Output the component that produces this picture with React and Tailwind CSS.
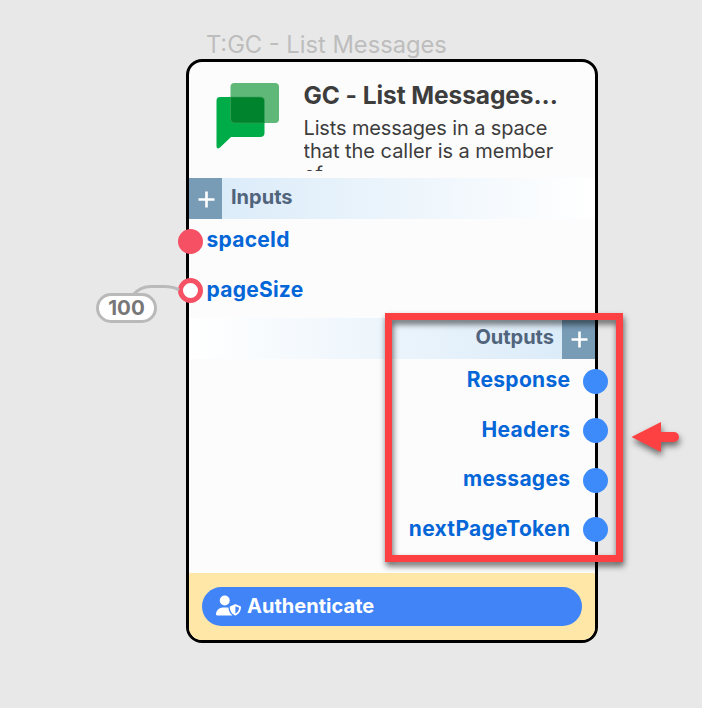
import { FaUserShield } from "react-icons/fa6";

function Plus() {
  return (
    <div className="flex h-[41px] w-[33px] shrink-0 items-center justify-center bg-[#789bb6]">
      <svg className="mt-[2px] ml-px" width="17" height="17" viewBox="0 0 17 17">
        <path d="M8.5 0.5V16.5M0.5 8.5H16.5" stroke="#fff" strokeWidth="2.6" />
      </svg>
    </div>
  );
}

function InputPort({ name, hollow }) {
  return (
    <div className="-ml-[11.5px] flex h-[49.6px] items-start gap-[4px] pt-[9.5px]">
      <div className={"h-[25px] w-[25px] shrink-0 rounded-full " + (hollow ? "border-[5px] border-[#f55064] bg-white" : "bg-[#f55064]")} />
      <span className="-mt-[2.4px] text-[21px] leading-[28px] font-bold tracking-[0.25px] text-[#0566d8]">{name}</span>
    </div>
  );
}

function OutputPort({ name }) {
  return (
    <div className="-mr-[13px] flex h-[49.6px] items-start justify-end gap-[12.7px] pt-[9.5px]">
      <span className="-mt-[2.4px] text-[21px] leading-[28px] font-bold tracking-[0.3px] text-[#0566d8]">{name}</span>
      <div className="h-[25px] w-[25px] shrink-0 rounded-full bg-[#3d8bfb]" />
    </div>
  );
}

function ChatLogo() {
  return (
    <svg className="mt-[21px] ml-[27px] shrink-0" width="64" height="66" viewBox="0 0 64 66">
      <path d="M4 14H44Q48.5 14 48.5 18V50Q48.5 54 44 54H15L4 64.5Q0.5 67 0.5 63V18Q0.5 14 4 14Z" fill="#00ac47" />
      <rect x="14.5" y="0" width="48.5" height="40" rx="4" fill="#5fb877" />
      <path d="M14.5 14H44Q48.5 14 48.5 18V40H18.5Q14.5 40 14.5 36Z" fill="#00832d" />
      <path d="M14.5 14H44Q48.5 14 48.5 18V40H18.5Q14.5 40 14.5 36Z" fill="none" stroke="#39a35a" strokeWidth="0.6" />
    </svg>
  );
}

export default function App() {
  return (
    <div className="relative h-[708px] w-[702px] overflow-hidden bg-[#e8e8e8] font-['Inter',sans-serif]">
      <div className="absolute top-[30px] left-[206px] text-[23.7px] leading-[30px] whitespace-nowrap text-[#bdbdbd]">T:GC - List Messages</div>

      <section className="absolute top-[59px] left-[186px] flex h-[584px] w-[412px] flex-col rounded-[16px] border-[3px] border-black bg-[#fcfcfc]">
        <header className="flex h-[116px] shrink-0">
          <ChatLogo />
          <div className="ml-[23.5px] h-[109px] overflow-hidden pt-[16px] whitespace-nowrap text-[#3d3d3d]">
            <h1 className="text-[24.5px] leading-[34px] font-bold tracking-[-0.08px]">GC - List Messages...</h1>
            <p className="mt-[5px] text-[20px] leading-[23px]">
              <span className="block tracking-[-0.14px]">Lists messages in a space</span>
              <span className="block tracking-[-0.04px]">that the caller is a member</span>
              <span className="block">of</span>
            </p>
          </div>
        </header>
        <div className="flex h-[41px] shrink-0 bg-linear-to-r from-[#d8eaf8] to-white">
          <Plus />
          <span className="ml-[9px] pt-[5px] text-[20px] leading-[28px] font-bold text-[#50647c]">Inputs</span>
        </div>
        <InputPort name="spaceId" />
        <InputPort name="pageSize" hollow />
        <div className="flex h-[41px] shrink-0 justify-end bg-linear-to-r from-white to-[#d8eaf8]">
          <span className="mr-[8px] pt-[5px] text-[20px] leading-[28px] font-bold text-[#50647c]">Outputs</span>
          <Plus />
        </div>
        <OutputPort name="Response" />
        <OutputPort name="Headers" />
        <OutputPort name="messages" />
        <OutputPort name="nextPageToken" />
        <footer className="mt-auto h-[67px] shrink-0 rounded-b-[13px] bg-[#ffe7a8] px-[13px] pt-[13.5px]">
          <button className="flex h-[39.5px] w-full items-center gap-[6px] rounded-full bg-[#4084f8] pl-[14px] text-[20px] font-bold text-white">
            <FaUserShield className="mb-[2px] h-[21px] w-[25px]" />
            <span className="tracking-[0.03px]">Authenticate</span>
          </button>
        </footer>
      </section>

      <svg className="absolute top-[280px] left-[130px]" width="52" height="20" viewBox="0 0 52 20">
        <path d="M3 15C8 9 13 6.5 21 6.5H34C41 6.5 45 7.5 49 10" fill="none" stroke="#bababa" strokeWidth="3" />
      </svg>
      <div className="absolute top-[293px] left-[96px] flex h-[30px] w-[61px] items-center justify-center rounded-full border-[3px] border-[#b9b9b9] bg-white text-[20.5px] font-bold text-[#777]">100</div>

      <div className="absolute top-[313px] left-[385px] h-[248.5px] w-[238px] border-[7px] border-[#fd4142] drop-shadow-[1px_4px_3px_rgba(0,0,0,0.6)]" />
      <svg className="absolute top-[415px] left-[625px] drop-shadow-[1px_4px_3px_rgba(0,0,0,0.55)]" width="65" height="42" viewBox="0 0 65 42">
        <path d="M6.5 22L36 7V17H49A5 5 0 0 1 49 27H36V37Z" fill="#fd4142" />
      </svg>
    </div>
  );
}
